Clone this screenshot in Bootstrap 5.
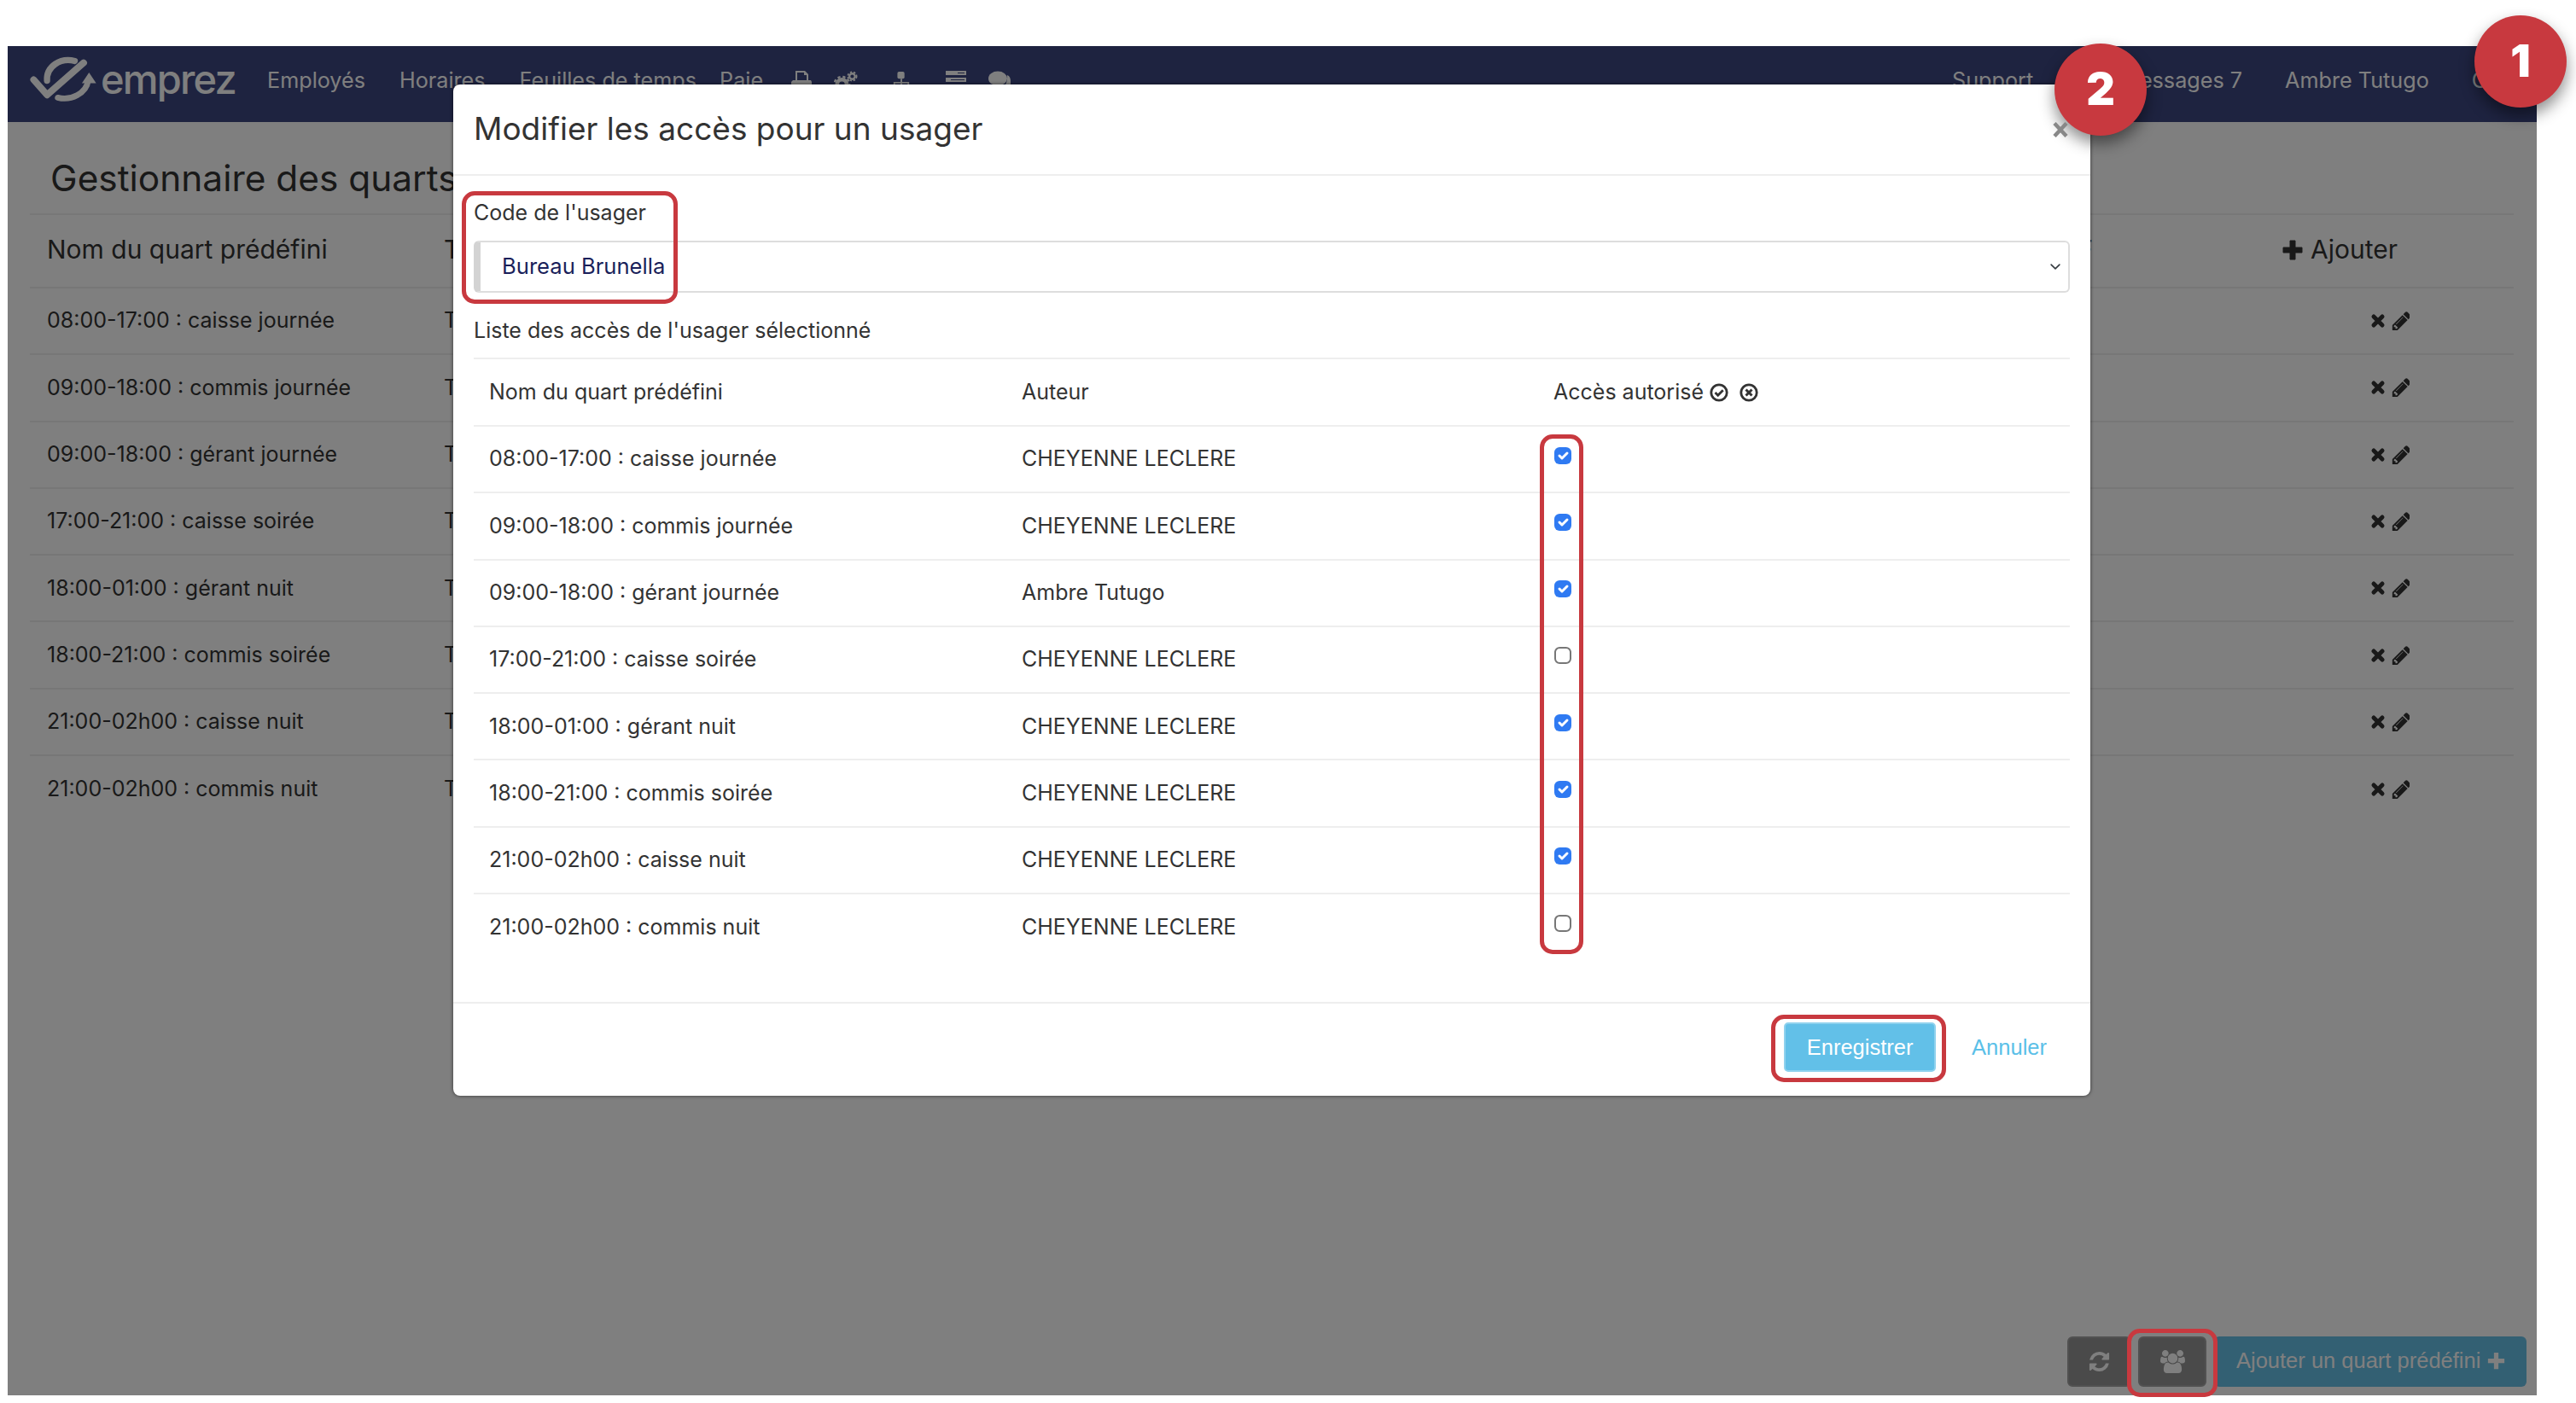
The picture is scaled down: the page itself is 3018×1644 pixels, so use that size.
<!DOCTYPE html>
<html lang="fr">
<head>
<meta charset="utf-8">
<title>Emprez</title>
<link href="https://cdn.jsdelivr.net/npm/bootstrap@5.3.0/dist/css/bootstrap.min.css" rel="stylesheet">
<style>
html,body{margin:0;background:#fff}
body{position:relative;width:3018px;height:1644px;overflow:hidden;font-family:Inter,"Noto Sans",sans-serif;font-size:25px;color:#333}
.app-frame{position:absolute;left:9px;top:54px;width:2963px;height:1581px;display:flex;flex-direction:column;background:#fff;overflow:hidden}
.app-nav{height:89px;background:#3c4680;padding:0 0 8px 21px;flex:none;color:#fff;font-size:25.2px;display:flex;align-items:center;flex-wrap:nowrap;white-space:nowrap}
.logo-wrap{display:flex;align-items:center;gap:0;width:283px;flex:none}
.logo-txt{font-size:47px;font-weight:500;letter-spacing:-1.8px;margin-left:-2px;line-height:1;margin-top:-4px}
.nav-items{display:flex;align-items:center;gap:40px}
.nav-items svg{display:block;fill:#fff;margin-top:3px}
.nav-tight{margin-left:-13px}
.nav-items .ic-print{margin-left:-7px}
.nav-items .ic-cog{margin-left:-14px}
.nav-items .ic-chat{margin-left:-15px}
.nav-r{margin-left:auto;display:flex;gap:50px;align-items:center;width:685px;flex:none}
.nav-msg{margin-left:52px}
.app-main{flex:1;padding:0 27px 0 26px;display:flex;flex-direction:column;min-height:0}
.page-ttl{font-size:42.4px;font-weight:400;margin:0;height:107px;line-height:107px;padding:12px 0 0 24px;color:#333;white-space:nowrap}
.bg-tbl{table-layout:fixed;width:2910px;margin:0;--bs-table-bg:transparent;--bs-table-color:#333;--bs-border-color:#eee;border-color:#eee}
.bg-tbl th,.bg-tbl td{padding:0 20px;vertical-align:middle;white-space:nowrap;border-width:0 0 2px 0;font-weight:400}
.bg-tbl thead tr{height:86px}
.bg-tbl thead tr th{border-top-width:2px;font-size:30px;padding-bottom:3px}
.bg-tbl tbody tr{height:78.3px}
.bg-tbl tbody tr:last-child td{border-bottom-width:0}
.bc1{width:465px}.bc2{width:1000px}.bc3{width:1154px}
.bg-tbl .th-right{text-align:right;padding-right:202px}
.row-acts{display:flex;align-items:center;gap:6px;padding-left:103px}
.add-head{display:flex;align-items:center;gap:9px;font-size:30px}
.foot-bar{display:flex;justify-content:flex-end;align-items:center;padding:0 12px 10px 0;gap:8px;flex:none;font-family:"Liberation Sans",Arial,sans-serif}
.btn-tool{height:59px;background:#959595;border:2px solid #a3a3a3;border-radius:6px;display:flex;align-items:center;justify-content:center;padding:0;color:#fff}
.btn-tool svg{fill:#fff}
.btn-ref{width:75px}.btn-team{width:80px;margin-right:1px}
.btn-add{width:366px;height:59px;background:#66c0e6;border:0;border-radius:6px;color:#fff;font-size:25.5px;padding:0 0 3px 26px;display:flex;align-items:center;gap:8px}
.dim-layer{position:absolute;inset:0;background:rgba(0,0,0,.5)}
.dlg{position:absolute;left:522px;top:45px;width:1918px;height:1185px;border:0;border-radius:8px;box-shadow:0 0 4px rgba(0,0,0,.6);background:#fff;color:#333;--bs-modal-header-padding:0}
.dlg .modal-header{height:107px;flex:none;border-bottom:2px solid #eee;padding:0 24px;display:flex;justify-content:space-between;align-items:center}
.dlg .modal-title{font-size:37px;font-weight:400;line-height:1;margin-top:-3px}
.x-btn{background:none;border:0;padding:0;margin:0 2px 0 0;display:block;position:relative;z-index:1}
.dlg .modal-body{flex:1;padding:28px 24px 0;min-height:0}
.fld-label{display:block;height:30px;line-height:30px;margin:0 0 18px}
.fld-select{height:61px;border:2px solid #ddd;border-left:8px solid #d3d3d3;border-radius:6px;padding:0 30px 0 25px;color:#1a1f5a;font-size:25.6px;background-position:right 6px center;background-size:18px 13px;width:100%}
.list-ttl{height:30px;line-height:30px;margin:29px 0 17px}
.acc-tbl{table-layout:fixed;width:100%;margin:0;--bs-table-bg:transparent;--bs-table-color:#333;--bs-border-color:#eee}
.acc-tbl th,.acc-tbl td{padding:0 18px;vertical-align:middle;white-space:nowrap;font-weight:400;border-width:0 0 2px 0}
.acc-tbl thead th{border-top-width:2px;height:79px}
.acc-tbl tbody tr{height:78.3px}
.acc-tbl tbody tr:last-child td{border-bottom-width:0}
.mc1{width:624px}.mc2{width:623px}
.acc-head{display:flex;align-items:center;gap:0}
.acc-head svg{margin-left:7px}
.acc-head svg+svg{margin-left:13px}
.acc-check{width:20px;height:20px;margin:0 0 12px 1px;vertical-align:middle;border-radius:3px;border:2px solid #777}
.acc-check:checked{background-color:#2f7af2;border:0;background-size:100% 100%}
.dlg .modal-footer{height:110px;flex:none;border-top:2px solid #eee;padding:0 51px 6px 0;display:flex;justify-content:flex-end;align-items:center;font-family:"Liberation Sans",Arial,sans-serif;gap:0}
.btn-save{width:178px;height:58px;background:#62c0e8;border:2px solid #8fd2ee;border-radius:5px;color:#fff;font-size:25.5px;padding:0;margin:0 42px 0 0}
.btn-cancel{color:#5bc0e8;font-size:25.5px;text-decoration:none}
.mark-box{position:absolute;border:5px solid #c8393f;border-radius:15px}
.mk-code{left:541px;top:224px;width:253px;height:132px}
.mk-check{left:1804px;top:509px;width:51px;height:609px}
.mk-save{left:2075px;top:1189px;width:205px;height:79px}
.mk-team{left:2492px;top:1557px;width:106px;height:80px}
.step-dot{position:absolute;width:108px;height:108px;border-radius:50%;background:#c8393f;color:#fff;font-family:Inter,sans-serif;font-weight:900;font-size:52px;display:flex;align-items:center;justify-content:center;box-shadow:0 9px 18px rgba(0,0,0,.45);line-height:1}
.dot-a{left:2899px;top:18px}
.dot-b{left:2407px;top:51px}
</style>
</head>
<body>
<svg width="0" height="0" class="d-none">
  <defs>
    <symbol id="i-x" viewBox="0 0 18 18"><path d="M4 4L14 14M14 4L4 14" fill="none" stroke="#333" stroke-width="5" stroke-linecap="round"/></symbol>
    <symbol id="i-pen" viewBox="0 0 1536 1536"><path fill="#333" transform="translate(0,-128)" d="M491 1536l91-91-235-235-91 91v107h128v128h107zm523-928q0-22-22-22-10 0-17 7l-542 542q-7 7-7 17 0 22 22 22 10 0 17-7l542-542q7-7 7-17zm-54-192l416 416-832 832h-416v-416zm683 96q0 53-37 90l-166 166-416-416 166-165q36-38 90-38 53 0 91 38l235 234q37 39 37 91z"/></symbol>
  </defs>
</svg>
<div class="app-frame">
  <nav class="app-nav navbar">
    <div class="logo-wrap">
      <svg width="90" height="62" viewBox="13 15 86 59" fill="none" stroke="#fff" stroke-linecap="round">
        <path d="M22 43L37 60L78 24" stroke-width="7.500" stroke-linejoin="round"/>
        <path d="M37 44C36 28 52 18 68 22" stroke-width="7"/>
        <path d="M49 63C64 67 81 58 83 44" stroke-width="6.500"/>
        <path d="M76 47L84 35L92 47Z" fill="#fff" stroke="none"/>
      </svg>
      <span class="logo-txt">emprez</span>
    </div>
    <div class="nav-items">
      <span>Employés</span><span>Horaires</span><span>Feuilles de temps</span><span class="nav-tight">Paie</span>
      <svg class="ic-print" width="24" height="26" viewBox="0 0 24 26"><path d="M5 0h11l4 4v7h3l1 2v10H0V13l2-2h3zm2 2v9h11V5h-3V2z" fill-rule="evenodd"/></svg>
      <svg class="ic-cog" width="28" height="26" viewBox="0 0 30 28"><circle cx="10" cy="17" r="6" fill="none" stroke="#fff" stroke-width="5"/><circle cx="10" cy="17" r="9.500" fill="none" stroke="#fff" stroke-width="2.500" stroke-dasharray="3.500 3"/><circle cx="23" cy="7" r="3.500" fill="none" stroke="#fff" stroke-width="2.500"/><circle cx="23" cy="7" r="5.500" fill="none" stroke="#fff" stroke-width="2" stroke-dasharray="2.500 2"/></svg>
      <svg width="22" height="26" viewBox="0 0 24 26"><rect x="7" y="0" width="9" height="9" rx="2"/><path d="M11 9h2v4h9v8h-2v-6h-7v6h-2v-6H4v6H2v-8h9z"/></svg>
      <svg width="26" height="26" viewBox="0 0 26 26"><path fill-rule="evenodd" d="M1 0h24v5H1zM15 2v1h8V2zM1 8h24v5H1zM7 10v1h16v-1zM1 16h24v5H1z"/></svg>
      <svg class="ic-chat" width="26" height="26" viewBox="0 0 26 26"><ellipse cx="11" cy="9" rx="11" ry="8.500"/><path d="M22 5c3 1 4 4 4 7v9H16c3-2 7-8 6-16z"/></svg>
    </div>
    <div class="nav-r"><span>Support</span><span class="nav-msg">Messages 7</span><span>Ambre Tutugo</span><span>Cie</span></div>
  </nav>
  <main class="app-main">
    <h3 class="page-ttl">Gestionnaire des quarts</h3>
    <table class="table bg-tbl">
      <colgroup><col class="bc1"><col class="bc2"><col class="bc3"><col></colgroup>
      <thead><tr><th>Nom du quart prédéfini</th><th>Titre</th><th class="th-right">ACTIF</th><th><span class="add-head"><svg width="24" height="24" viewBox="0 0 24 24"><path d="M9 1h6v8h8v6h-8v8H9v-8H1V9h8z" fill="#333" stroke="#333" stroke-linejoin="round"/></svg>Ajouter</span></th></tr></thead>
      <tbody>
        <tr><td>08:00-17:00 : caisse journée</td><td>Tous</td><td></td><td><div class="row-acts"><svg width="18" height="18"><use href="#i-x"/></svg><svg width="22" height="22"><use href="#i-pen"/></svg></div></td></tr>
        <tr><td>09:00-18:00 : commis journée</td><td>Tous</td><td></td><td><div class="row-acts"><svg width="18" height="18"><use href="#i-x"/></svg><svg width="22" height="22"><use href="#i-pen"/></svg></div></td></tr>
        <tr><td>09:00-18:00 : gérant journée</td><td>Tous</td><td></td><td><div class="row-acts"><svg width="18" height="18"><use href="#i-x"/></svg><svg width="22" height="22"><use href="#i-pen"/></svg></div></td></tr>
        <tr><td>17:00-21:00 : caisse soirée</td><td>Tous</td><td></td><td><div class="row-acts"><svg width="18" height="18"><use href="#i-x"/></svg><svg width="22" height="22"><use href="#i-pen"/></svg></div></td></tr>
        <tr><td>18:00-01:00 : gérant nuit</td><td>Tous</td><td></td><td><div class="row-acts"><svg width="18" height="18"><use href="#i-x"/></svg><svg width="22" height="22"><use href="#i-pen"/></svg></div></td></tr>
        <tr><td>18:00-21:00 : commis soirée</td><td>Tous</td><td></td><td><div class="row-acts"><svg width="18" height="18"><use href="#i-x"/></svg><svg width="22" height="22"><use href="#i-pen"/></svg></div></td></tr>
        <tr><td>21:00-02h00 : caisse nuit</td><td>Tous</td><td></td><td><div class="row-acts"><svg width="18" height="18"><use href="#i-x"/></svg><svg width="22" height="22"><use href="#i-pen"/></svg></div></td></tr>
        <tr><td>21:00-02h00 : commis nuit</td><td>Tous</td><td></td><td><div class="row-acts"><svg width="18" height="18"><use href="#i-x"/></svg><svg width="22" height="22"><use href="#i-pen"/></svg></div></td></tr>
      </tbody>
    </table>
    <div class="flex-grow-1"></div>
  </main>
  <div class="foot-bar">
    <button class="btn-tool btn-ref" type="button"><svg width="27" height="27" viewBox="0 0 1792 1792"><path d="M1639 1056q0 5-1 7-64 268-268 434.500t-478 166.500q-146 0-282.500-55t-243.500-157l-129 129q-19 19-45 19t-45-19-19-45v-448q0-26 19-45t45-19h448q26 0 45 19t19 45-19 45l-137 137q71 66 161 102t187 36q134 0 250-65t186-179q11-17 53-117 8-23 30-23h192q13 0 22.500 9.500t9.500 22.500zm25-800v448q0 26-19 45t-45 19h-448q-26 0-45-19t-19-45 19-45l138-138q-148-137-349-137-134 0-250 65t-186 179q-11 17-53 117-8 23-30 23h-199q-13 0-22.500-9.500t-9.500-22.500v-7q65-268 270-434.500t480-166.500q146 0 284 55.500t245 156.500l130-129q19-19 45-19t45 19 19 45z"/></svg></button>
    <button class="btn-tool btn-team" type="button"><svg width="29" height="27" viewBox="0 0 1920 1792"><path d="M593 896q-162 5-265 128h-134q-82 0-138-40.500t-56-118.500q0-353 124-353 6 0 43.500 21t97.500 42.500 119 21.500q67 0 133-23-5 37-5 66 0 139 81 256zm1071 637q0 120-73 189.500t-194 69.500h-874q-121 0-194-69.500t-73-189.500q0-53 3.500-103.500t14-109 26.500-108.500 43-97.500 62-81 85.500-53.500 111.500-20q10 0 43 21.500t73 48 107 48 135 21.500 135-21.500 107-48 73-48 43-21.500q61 0 111.500 20t85.500 53.500 62 81 43 97.500 26.500 108.500 14 109 3.500 103.500zm-1024-1277q0 106-75 181t-181 75-181-75-75-181 75-181 181-75 181 75 75 181zm704 384q0 159-112.500 271.500t-271.500 112.500-271.500-112.500-112.500-271.500 112.500-271.500 271.500-112.500 271.500 112.500 112.500 271.500zm576 225q0 78-56 118.500t-138 40.500h-134q-103-123-265-128 81-117 81-256 0-29-5-66 66 23 133 23 59 0 119-21.500t97.500-42.500 43.500-21q124 0 124 353zm-128-609q0 106-75 181t-181 75-181-75-75-181 75-181 181-75 181 75 75 181z"/></svg></button>
    <button class="btn-add" type="button">Ajouter un quart prédéfini <svg width="21" height="21" viewBox="0 0 24 24"><path d="M9 1h6v8h8v6h-8v8H9v-8H1V9h8z" fill="#fff"/></svg></button>
  </div>
  <div class="dim-layer"></div>
  <div class="modal-content dlg">
    <div class="modal-header">
      <h5 class="modal-title">Modifier les accès pour un usager</h5>
      <button class="x-btn" type="button" aria-label="Fermer"><svg class="d-block" width="18" height="18" viewBox="0 0 18 18"><path d="M2 1.500L16 16.500M16 1.500L2 16.500" stroke="#888" stroke-width="4.500" fill="none"/></svg></button>
    </div>
    <div class="modal-body">
      <label class="fld-label">Code de l'usager</label>
      <select class="form-select fld-select"><option>Bureau Brunella</option></select>
      <div class="list-ttl">Liste des accès de l'usager sélectionné</div>
      <table class="table acc-tbl">
        <colgroup><col class="mc1"><col class="mc2"><col></colgroup>
        <thead><tr><th>Nom du quart prédéfini</th><th>Auteur</th><th><span class="acc-head">Accès autorisé<svg width="22" height="22" viewBox="0 0 22 22"><circle cx="11" cy="11" r="9.200" fill="none" stroke="#333" stroke-width="2.800"/><path d="M6.500 11l3.200 3.200 6-6" fill="none" stroke="#333" stroke-width="2.800"/></svg><svg width="22" height="22" viewBox="0 0 22 22"><circle cx="11" cy="11" r="9.200" fill="none" stroke="#333" stroke-width="2.800"/><path d="M7.500 7.500l7 7M14.500 7.500l-7 7" fill="none" stroke="#333" stroke-width="3"/></svg></span></th></tr></thead>
        <tbody>
          <tr><td>08:00-17:00 : caisse journée</td><td>CHEYENNE LECLERE</td><td><input class="form-check-input acc-check" type="checkbox" checked></td></tr>
          <tr><td>09:00-18:00 : commis journée</td><td>CHEYENNE LECLERE</td><td><input class="form-check-input acc-check" type="checkbox" checked></td></tr>
          <tr><td>09:00-18:00 : gérant journée</td><td>Ambre Tutugo</td><td><input class="form-check-input acc-check" type="checkbox" checked></td></tr>
          <tr><td>17:00-21:00 : caisse soirée</td><td>CHEYENNE LECLERE</td><td><input class="form-check-input acc-check" type="checkbox"></td></tr>
          <tr><td>18:00-01:00 : gérant nuit</td><td>CHEYENNE LECLERE</td><td><input class="form-check-input acc-check" type="checkbox" checked></td></tr>
          <tr><td>18:00-21:00 : commis soirée</td><td>CHEYENNE LECLERE</td><td><input class="form-check-input acc-check" type="checkbox" checked></td></tr>
          <tr><td>21:00-02h00 : caisse nuit</td><td>CHEYENNE LECLERE</td><td><input class="form-check-input acc-check" type="checkbox" checked></td></tr>
          <tr><td>21:00-02h00 : commis nuit</td><td>CHEYENNE LECLERE</td><td><input class="form-check-input acc-check" type="checkbox"></td></tr>
        </tbody>
      </table>
    </div>
    <div class="modal-footer">
      <button class="btn btn-save" type="button">Enregistrer</button>
      <a class="btn-cancel" href="#">Annuler</a>
    </div>
  </div>
</div>
<div class="mark-box mk-code"></div>
<div class="mark-box mk-check"></div>
<div class="mark-box mk-save"></div>
<div class="mark-box mk-team"></div>
<div class="step-dot dot-a">1</div>
<div class="step-dot dot-b">2</div>
<script src="https://cdn.jsdelivr.net/npm/bootstrap@5.3.0/dist/js/bootstrap.bundle.min.js"></script>
</body>
</html>
